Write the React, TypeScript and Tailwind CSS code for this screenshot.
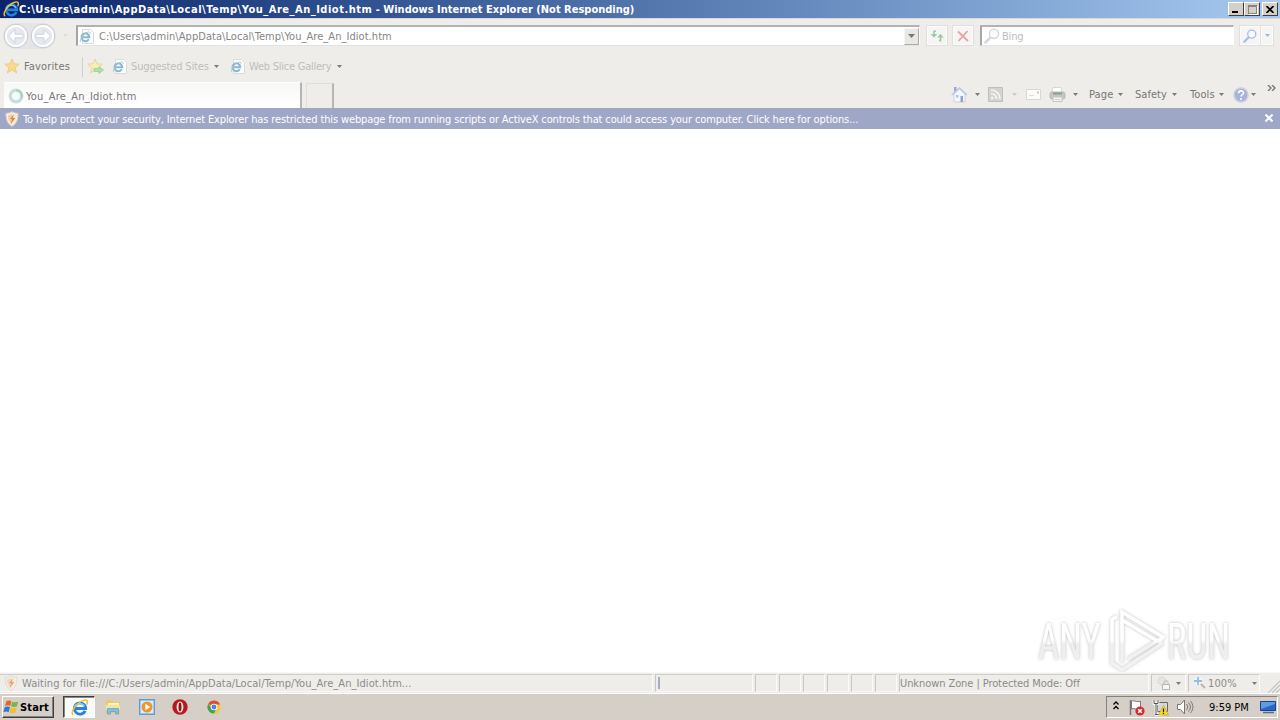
import type { ReactNode } from "react";
import clsx from "clsx";

const ADDRESS = "C:\\Users\\admin\\AppData\\Local\\Temp\\You_Are_An_Idiot.htm";

function Caret({ className }: { className?: string }) {
  return (
    <svg viewBox="0 0 5 3" className={clsx("h-[3px] w-[5px] shrink-0", className)}>
      <path d="M0 0h5L2.5 3z" fill="#7b7b79" />
    </svg>
  );
}

function IeLogo({ size }: { size: number }) {
  return (
    <svg width={size} height={size} viewBox="0 0 16 16" className="shrink-0">
      <path d="M13.3 11.2A5.300 5.300 0 1 1 13.800 8.900H4.500" fill="none" stroke="#2484dc" strokeWidth="2.700" />
      <path d="M3.300 7.500C4.300 4 10.500 2.800 12.800 6.800" fill="none" stroke="#8fd6fa" strokeWidth="1.100" />
      <path d="M2.200 15C-1.200 13.500 4 4.500 11 1.500c4-1.600 5.200.200 3.700 3.800" fill="none" stroke="#f0bf38" strokeWidth="1.400" />
    </svg>
  );
}

function PageIcon() {
  return (
    <svg width="15" height="15" viewBox="0 0 15 15" className="shrink-0">
      <path d="M3.500.5h8l3 3v11h-11z" fill="#fdfdfd" stroke="#dadad8" />
      <path d="M9.800 10.200A3.900 3.900 0 1 1 10.300 8.300H3.500" fill="none" stroke="#86b7d3" strokeWidth="2" />
      <path d="M1.500 12.800C0 11 5.500 3.500 9.500 3c2-.2 2 1 1.500 2" fill="none" stroke="#b5cfb9" />
    </svg>
  );
}

function Star({ plus }: { plus?: boolean }) {
  return (
    <svg width="17" height="17" viewBox="0 0 17 17" className="shrink-0">
      <path
        d="M8 1l2 4.800 5.200.4-4 3.400 1.300 5.200L8 12l-4.500 2.800 1.300-5.200-4-3.400L6 5.800z"
        fill={plus ? "#f8edb5" : "#f9d98c"}
        stroke={plus ? "#e8d79a" : "#efcb84"}
      />
      {plus && <path d="M7 10.500h5V8.500l4.500 3.500-4.500 3.500v-2H7z" fill="#b5dfa5" stroke="#9ccf91" strokeWidth=".8" />}
    </svg>
  );
}

function Shield({ faded }: { faded?: boolean }) {
  return (
    <svg width="14" height="16" viewBox="0 0 14 16" className="shrink-0" opacity={faded ? 0.7 : 1}>
      <path d="M7 .7c2 1.300 4 1.600 6 1.600 0 6-1 10-6 13C2 12.300 1 8.300 1 2.300c2 0 4-.3 6-1.600z" fill="#f6eee2" stroke="#ddd0c4" />
      <path d="M7 3C5.500 4 4 4.300 3 4.300c0 4 .8 6.500 4 8.700z" fill="#f0cfaa" />
      <path d="M7 3c1.500 1 3 1.300 4 1.300 0 4-.8 6.500-4 8.700z" fill="#f9e6c4" />
      <path d="M8.800 3L5 8.300h2.200L5.500 13.200 10.300 7H7.800z" fill="#d98348" />
    </svg>
  );
}

function NavCircle({ forward }: { forward?: boolean }) {
  return (
    <svg width="26" height="26" viewBox="0 0 26 26" className="shrink-0">
      <circle cx="13" cy="13" r="11.800" fill="#f5f6f8" stroke="#c7c9cd" />
      <circle cx="13" cy="13" r="10" fill="#e6eaf0" stroke="#fff" strokeWidth="1.500" />
      <path
        d="M12 6.500L5.500 13l6.500 6.500v-4.700h8v-3.600h-8z"
        fill="#fff"
        stroke="#ccd3dd"
        transform={forward ? "matrix(-1 0 0 1 26 0)" : undefined}
      />
    </svg>
  );
}

function ToolButton({ children, className }: { children: ReactNode; className?: string }) {
  return (
    <div className={clsx("flex h-[21px] items-center justify-center border border-[#dfdfdd] bg-[#f5f5f4] shadow-[inset_0_0_0_1px_#fbfbfb]", className)}>
      {children}
    </div>
  );
}

function Magnifier({ color, size }: { color: string; size: number }) {
  return (
    <svg width={size} height={size} viewBox="0 0 16 16" className="shrink-0">
      <path d="M6.500 9.500L1.500 14.500" stroke={color} strokeWidth="2.600" strokeLinecap="round" />
      <circle cx="10" cy="5.800" r="4.600" fill="#fbfcfe" stroke={color} strokeWidth="1.500" />
    </svg>
  );
}

function TitleBar() {
  const button = "flex h-[14px] border border-t-white border-l-white border-r-[#404040] border-b-[#404040] bg-[#d4d0c8]";
  return (
    <div className="flex h-[18px] items-center bg-linear-to-r from-[#0a246a] to-[#a6caf0] pl-[3px] pr-[2px]">
      <IeLogo size={16} />
      <span className="text-[11px] font-bold whitespace-pre text-white">
        <span className="tracking-[0.510px]">{ADDRESS}</span>
        <span> - Windows Internet Explorer (Not Responding)</span>
      </span>
      <div className="ml-auto flex">
        <div className={clsx(button, "w-4 items-end pb-[2px] pl-[3px]")}>
          <div className="h-[2px] w-[6px] bg-black" />
        </div>
        <div className={clsx(button, "w-4 items-center justify-center")}>
          <div className="h-[9px] w-[9px] border border-t-2 border-[#87847f] shadow-[1px_1px_0_#fff]" />
        </div>
        <div className={clsx(button, "ml-[2px] w-4 items-center justify-center")}>
          <svg width="8" height="7" viewBox="0 0 8 7">
            <path d="M.5 0l7 7M7.500 0l-7 7" stroke="#000" strokeWidth="1.700" />
          </svg>
        </div>
      </div>
    </div>
  );
}

function AddressRow() {
  return (
    <div className="flex h-[34px] items-center border-t border-[#dcd9d4] pl-[3px] text-[11px] text-[#858585]">
      <div className="flex gap-px rounded-full bg-[#e5e5e8]">
        <NavCircle />
        <NavCircle forward />
      </div>
      <svg width="5" height="3" viewBox="0 0 5 3" className="ml-[7px]">
        <path d="M0 0h5L2.500 3z" fill="#dcdcda" />
      </svg>
      <div className="ml-[8px] flex h-[21px] w-[844px] items-center border border-t-2 border-l-2 border-t-[#b0b3b3] border-l-[#a5a5a5] border-r-[#f9f9f9] border-b-[#e3e3e1] bg-white pl-px">
        <PageIcon />
        <span className="ml-[5px] tracking-[0.050px]">{ADDRESS}</span>
        <div className="ml-auto flex h-[17px] w-[15px] items-center justify-center border border-t-[#f5f5f5] border-l-[#f5f5f5] border-r-[#aaa] border-b-[#aaa] bg-[#e9e7e4]">
          <svg width="7" height="4" viewBox="0 0 7 4">
            <path d="M0 0h7L3.500 4z" fill="#777" />
          </svg>
        </div>
      </div>
      <ToolButton className="ml-[6px] w-[22px]">
        <svg width="14" height="12" viewBox="0 0 14 12">
          <path d="M6 1.200H4v4M9 10.800h1.500v-4" fill="none" stroke="#9acba0" strokeWidth="1.600" />
          <path d="M.8 4h6.400L4 7.800zM7.300 7.500h6.400l-3.200-3.800z" fill="#9acba0" />
        </svg>
      </ToolButton>
      <ToolButton className="ml-1 w-[22px]">
        <svg width="12" height="12" viewBox="0 0 12 12">
          <path d="M1 1.500L11 11M10.500 1L1.500 11" stroke="#e6a5a5" strokeWidth="1.800" />
        </svg>
      </ToolButton>
      <div className="ml-[6px] flex h-[21px] w-[254px] items-center border border-t-2 border-l-2 border-t-[#b3b3b3] border-l-[#a7a7a9] border-r-[#fff] border-b-[#e4e4e2] bg-white pl-[2px] text-[#bcbcbc]">
        <Magnifier color="#d8d7dc" size={16} />
        <span className="ml-[2px] tracking-[-0.200px]">Bing</span>
      </div>
      <ToolButton className="ml-[5px] w-[22px]">
        <Magnifier color="#a9bdeb" size={14} />
      </ToolButton>
      <ToolButton className="w-[13px] border-l-0">
        <svg width="5" height="3" viewBox="0 0 5 3">
          <path d="M0 0h5L2.500 3z" fill="#9fb3dc" />
        </svg>
      </ToolButton>
    </div>
  );
}

function FavoritesRow() {
  return (
    <div className="flex h-[29px] items-center pl-1 text-[11px] text-[#bebdbb]">
      <Star />
      <span className="ml-[3px] w-[58px] tracking-[0.150px] text-[#777775]">Favorites</span>
      <div className="h-5 w-px bg-[#cfcfcd]" />
      <div className="ml-1 flex w-[25px]">
        <Star plus />
      </div>
      <PageIcon />
      <span className="ml-[4px] w-[83px] tracking-[-0.150px]">Suggested Sites</span>
      <Caret />
      <div className="ml-[11px] flex">
        <PageIcon />
      </div>
      <span className="ml-[4px] w-[88px] tracking-[-0.240px]">Web Slice Gallery</span>
      <Caret />
    </div>
  );
}

function HomeIcon() {
  return (
    <svg width="17" height="17" viewBox="0 0 17 17" className="shrink-0">
      <path d="M3 8v8h11V8L8.500 3z" fill="#f3f6fd" stroke="#cdd2e0" />
      <path d="M.8 8.800L8.500 2l7.200 6.800" fill="none" stroke="#bfc7e4" strokeWidth="1.600" />
      <path d="M3 1h2.500v3L3 6z" fill="#aaa2ce" />
      <path d="M9.500 10H12v6H9.500z" fill="#8da4c8" />
      <path d="M5 9h2.500v2.500H5z" fill="#b4c4e2" />
    </svg>
  );
}

function PrinterIcon() {
  return (
    <svg width="17" height="17" viewBox="0 0 17 17" className="shrink-0">
      <path d="M4 1.500h8l1 5H3z" fill="#fff" stroke="#d8d8d6" />
      <rect x="1" y="6" width="15" height="7" rx="2" fill="#c4c4c2" stroke="#bababa" />
      <path d="M4 7.500h9" stroke="#8c9c8f" strokeWidth="2" />
      <path d="M4 11h9v4.500H4z" fill="#f7f7f7" stroke="#c2c2c0" />
      <path d="M5.500 13.500h6" stroke="#c9d2c5" />
    </svg>
  );
}

const menus = [
  { label: "Page", className: "ml-[11px] w-[29px] tracking-[0.150px]" },
  { label: "Safety", className: "ml-[12px] w-[37px] tracking-[0.050px]" },
  { label: "Tools", className: "ml-[13px] w-[29px] tracking-[0.100px]" },
];

function TabRow() {
  return (
    <div className="flex h-[27px] items-end text-[11px]">
      <div className="ml-1 flex h-[26px] w-[298px] items-center border-t border-r-2 border-t-[#fff] border-r-[#b5b5b3] bg-linear-to-b from-[#f8f8f7] to-white pt-px pl-1">
        <svg width="16" height="16" viewBox="0 0 16 16">
          <circle cx="8" cy="8" r="5.800" fill="#f6fbf9" stroke="#c6ddd8" strokeWidth="3.200" />
          <path d="M8 2.200A5.800 5.800 0 0 1 13.500 10" fill="none" stroke="#a9d0c6" strokeWidth="2" />
        </svg>
        <span className="mt-px ml-[2px] tracking-[0.220px] text-[#777]">You_Are_An_Idiot.htm</span>
      </div>
      <div className="ml-1 h-[25px] w-[28px] border border-r-2 border-b-0 border-t-[#deddd9] border-l-[#e1dfdb] border-r-[#b6b6b4]" />
      <div className="ml-auto flex h-full items-center text-[#767674]">
        <HomeIcon />
        <Caret className="ml-[7px]" />
        <svg width="15" height="15" viewBox="0 0 15 15" className="ml-[8px]">
          <path d="M.5.5h14v14H.5z" fill="#d3d3d1" stroke="#bfbfbd" />
          <path d="M3 6.500A5.500 5.500 0 0 1 8.500 12M3 3a9 9 0 0 1 9 9" fill="none" stroke="#f5f5f5" strokeWidth="1.600" />
          <circle cx="4.200" cy="11" r="1.300" fill="#f5f5f5" />
        </svg>
        <Caret className="ml-[9px] opacity-30" />
        <svg width="15" height="11" viewBox="0 0 15 11" className="ml-[9px]">
          <path d="M.5.5h14v10H.5z" fill="#fbfbfa" stroke="#dad8d5" />
          <path d="M11 2.500h2v2h-2z" fill="#e0bdb6" />
          <path d="M3 6.500h5" stroke="#dedede" />
        </svg>
        <div className="ml-[8px] flex">
          <PrinterIcon />
        </div>
        <Caret className="ml-[7px]" />
        {menus.map((menu) => (
          <div key={menu.label} className="flex items-center">
            <span className={menu.className}>{menu.label}</span>
            <Caret />
          </div>
        ))}
        <svg width="16" height="16" viewBox="0 0 16 16" className="ml-[9px]">
          <circle cx="8" cy="8" r="7" fill="#a7b3da" stroke="#cdd0da" strokeWidth="1.500" />
          <path d="M5.500 6.200c.2-3.200 5.200-3 5 0C10.400 7.800 8 7.600 8 9.500M8 11v2" fill="none" stroke="#fff" strokeWidth="1.600" />
        </svg>
        <Caret className="ml-[2px]" />
        <svg width="9" height="6" viewBox="0 0 9 6" className="mr-1 ml-[11px] mb-[13px]" fill="none" stroke="#6f6f6d" strokeWidth="1.300">
          <path d="M1 0l3 3-3 3M5 0l3 3-3 3" />
        </svg>
      </div>
    </div>
  );
}

function InfoBar() {
  return (
    <div className="flex h-[21px] items-center bg-[#9fa7c6] pr-[7px] pl-[5px] text-[11px] text-white">
      <Shield />
      <span className="mt-px ml-1 tracking-[-0.128px]">
        To help protect your security, Internet Explorer has restricted this webpage from running scripts or ActiveX controls that could access your computer. Click here for options...
      </span>
      <svg width="8" height="8" viewBox="0 0 8 8" className="ml-auto mb-[2px]">
        <path d="M.5.5l7 7M7.500.5l-7 7" stroke="#fff" strokeWidth="2" />
      </svg>
    </div>
  );
}

function Watermark() {
  return (
    <svg width="204" height="72" viewBox="0 0 204 72" className="absolute right-[40px] bottom-[-4px]">
      <defs>
        <linearGradient id="mark" gradientUnits="userSpaceOnUse" x1="0" y1="0" x2="0" y2="72">
          <stop offset=".5" stopColor="#fff" />
          <stop offset=".56" stopColor="#f0f0f0" />
          <stop offset="1" stopColor="#f3f3f3" />
        </linearGradient>
        {/* the text is drawn from its own origin, so its shading is too */}
        <linearGradient id="letters" gradientUnits="userSpaceOnUse" x1="0" y1="-55" x2="0" y2="17">
          <stop offset=".5" stopColor="#fff" />
          <stop offset=".56" stopColor="#ededed" />
          <stop offset="1" stopColor="#f3f3f3" />
        </linearGradient>
        <filter id="glow" x="-10%" y="-10%" width="120%" height="120%">
          <feDropShadow dx="0" dy="0" stdDeviation="1.600" floodColor="#888" floodOpacity=".6" />
        </filter>
      </defs>
      <g fill="url(#letters)" fontFamily="Roboto, sans-serif" fontSize="49" filter="url(#glow)">
        <text transform="translate(2 55) scale(.75 1)">ANY</text>
        <text transform="translate(131 55) scale(.75 1)">RUN</text>
      </g>
      <g fill="none" stroke="url(#mark)" strokeWidth="3.500" filter="url(#glow)">
        <path d="M81 12.500l-5 3V59l10 7 41-27" />
        <path d="M92 55l34-21" />
        <path d="M86 58V8l41 25-4 5-37-22" />
      </g>
    </svg>
  );
}

function StatusPane({ className, children }: { className?: string; children?: ReactNode }) {
  return (
    <div className={clsx("flex h-[18px] items-center border border-t-[#cfcecb] border-l-[#c9c8c6] border-r-[#fbfbfb] border-b-[#f8f8f8]", className)}>
      {children}
    </div>
  );
}

function StatusBar() {
  return (
    <div className="relative flex h-[21px] items-center gap-[2px] border-t border-[#f8f8f8] bg-[#efedea] text-[11px] text-[#8b8b89]">
      <StatusPane className="w-[653px] border-l-0 pl-1">
        <Shield faded />
        <span className="ml-1 tracking-[0.060px]">Waiting for file:///C:/Users/admin/AppData/Local/Temp/You_Are_An_Idiot.htm...</span>
      </StatusPane>
      <StatusPane className="w-[98px] pl-[2px]">
        <div className="h-3 w-[2px] bg-[#a5acc4]" />
      </StatusPane>
      {Array.from({ length: 6 }, (_, i) => (
        <StatusPane key={i} className="w-[22px]" />
      ))}
      <StatusPane className="w-[250px]">
        <span className="tracking-[-0.080px]">Unknown Zone | Protected Mode: Off</span>
      </StatusPane>
      <StatusPane className="w-[35px] pl-1">
        <svg width="15" height="15" viewBox="0 0 15 15">
          <circle cx="6" cy="5" r="4" fill="#e5e5e4" stroke="#d2d2d0" strokeDasharray="2 1" />
          <path d="M6.500 8.500h7v5h-7z" fill="#f8f8f8" stroke="#b4b4b2" />
          <path d="M8 8V6.500c0-2.500 4-2.500 4 0V8" fill="none" stroke="#b4b4b2" />
        </svg>
        <Caret className="ml-[5px]" />
      </StatusPane>
      <StatusPane className="w-[72px] pl-1">
        <svg width="14" height="14" viewBox="0 0 14 14">
          <path d="M7 7l5 5" stroke="#bdb6a8" strokeWidth="2" />
          <circle cx="5" cy="5" r="4" fill="#eef6fb" />
          <path d="M5 1v8M1 5h8" stroke="#8fbfe3" strokeWidth="1.800" />
        </svg>
        <span className="ml-px w-[44px] tracking-[0.100px]">100%</span>
        <Caret />
      </StatusPane>
      <svg width="12" height="12" viewBox="0 0 12 12" className="ml-auto self-end" stroke="#c2c1be" strokeWidth="1.200">
        <path d="M0 12L12 0M4 12l8-8M8 12l4-4" />
      </svg>
    </div>
  );
}

function StartFlag() {
  return (
    <svg width="17" height="16" viewBox="0 0 17 16" className="shrink-0">
      <path d="M3.500 2c2-1 3.500-.6 5 .2L7.200 7c-1.700-.8-3-.9-5.200-.1z" fill="#e8622c" />
      <path d="M9.300 2.700c2 .9 3.800.8 6-.2L14 7.200c-2 1-4 1-6 .1z" fill="#75b843" />
      <path d="M1.800 8c2-.9 3.500-.7 5.200.1l-1.300 5c-2-.9-3.500-.8-5.300 0z" fill="#2f78cf" />
      <path d="M7.800 8.500c2 .9 4 .8 6-.1l-1.400 5c-2 .9-4 .9-6 0z" fill="#f3bd2d" />
    </svg>
  );
}

function Taskbar() {
  return (
    <div className="flex h-[27px] items-center border-t border-white bg-[#d5cfc7] pr-[2px] pl-[2px]">
      <div className="flex h-[22px] w-[52px] items-center border border-t-white border-l-white border-r-[#404040] border-b-[#404040] shadow-[inset_-1px_-1px_0_#85817b]">
        <StartFlag />
        <span className="text-[11px] font-bold tracking-[0.150px] text-black">Start</span>
      </div>
      <div className="ml-[9px] flex h-[22px] w-[32px] items-center justify-center border border-t-[#404040] border-l-[#404040] border-r-white border-b-white bg-[#fafaf9] pl-px shadow-[inset_1px_1px_0_#888]">
        <IeLogo size={17} />
      </div>
      <svg width="16" height="16" viewBox="0 0 16 16" className="ml-[10px]">
        <path d="M1 3V1h6l1 2h7v11H1z" fill="#e8cb6f" />
        <path d="M3 4h11v4H3z" fill="#fbf4cf" />
        <path d="M1 6h14v5H1z" fill="#f7e39a" />
        <path d="M2.500 15V9.500h11V15h-3v-2.500h-5V15z" fill="#83bfe1" stroke="#589dc8" strokeWidth=".7" />
      </svg>
      <svg width="16" height="16" viewBox="0 0 16 16" className="ml-[18px]">
        <path d="M.7.700h14.600v14.600H.7z" fill="#d9ecfa" stroke="#5b9ed4" strokeWidth="1.400" />
        <circle cx="8" cy="8" r="5.500" fill="#f3942a" />
        <path d="M6.300 4.800v6.400L11.300 8z" fill="#fff" />
      </svg>
      <svg width="16" height="16" viewBox="0 0 16 16" className="ml-[17px]">
        <circle cx="8" cy="8" r="7.700" fill="#b71920" />
        <ellipse cx="8" cy="8" rx="3.400" ry="5.500" fill="#f4e7e5" />
        <ellipse cx="8" cy="8" rx="1.500" ry="4.400" fill="#8d1218" />
      </svg>
      <svg width="14" height="14" viewBox="0 0 16 16" className="ml-[19px]">
        <circle cx="8" cy="8" r="7.500" fill="#f4c83c" />
        <path d="M8 8L1.500 4.250A7.500 7.500 0 0 1 14.500 4.250L15 5H8z" fill="#df4b3d" />
        <path d="M1.500 4.250A7.500 7.500 0 0 0 8 15.500L10.500 10 5 9z" fill="#3ba659" />
        <circle cx="8" cy="8" r="3.700" fill="#fff" />
        <circle cx="8" cy="8" r="2.800" fill="#4685e4" />
      </svg>
      <div className="ml-auto flex h-[22px] w-[172px] items-center border border-t-[#85817b] border-l-[#85817b] border-r-white border-b-white pl-[6px]">
        <svg width="6" height="9" viewBox="0 0 6 9" className="mb-1" fill="none" stroke="#000" strokeWidth="1.300">
          <path d="M.5 3.500L3 1l2.500 2.500M.5 8L3 5.500 5.500 8" />
        </svg>
        <svg width="17" height="17" viewBox="0 0 17 17" className="ml-[10px]">
          <path d="M1.500 16V1" stroke="#777" strokeWidth="1.500" />
          <path d="M2.500 2c3-1 4 1.500 9 .3V10c-4 1.200-6-1.200-9-.2z" fill="#fff" stroke="#777" />
          <circle cx="11" cy="12" r="4.600" fill="#d62c30" />
          <path d="M9.200 10.200l3.600 3.600M12.800 10.200l-3.600 3.600" stroke="#fff" strokeWidth="1.500" />
        </svg>
        <svg width="17" height="17" viewBox="0 0 17 17" className="ml-[6px]">
          <path d="M5.500 3.500h10v9h-10z" fill="#d6d6d4" stroke="#666" />
          <path d="M2 1v3.500h4V1M4 4.500v11M3 15.500h7" fill="none" stroke="#fff" strokeWidth="2.600" />
          <path d="M2 1v3.500h4V1M4 4.500v11M3 15.500h7" fill="none" stroke="#555" />
          <path d="M11.500 6.500l5 9.500h-10z" fill="#fbdc26" stroke="#c9a41a" strokeWidth=".7" />
          <path d="M11.500 9.500v3.500M11.500 13.800v1.200" stroke="#222" strokeWidth="1.300" />
        </svg>
        <svg width="17" height="16" viewBox="0 0 17 16" className="ml-[8px]" fill="none" stroke="#777">
          <path d="M.5 5.500h3L7.500 1v14L3.500 10.500h-3z" fill="#fff" />
          <path d="M9.500 5c1.500 2 1.500 4 0 6M11.500 3.500c2.500 3 2.500 6 0 9M13.500 2c3.200 4 3.200 8 0 12" />
        </svg>
        <span className="ml-[15px] w-[51px] text-[11px] text-black">9:59 PM</span>
        <svg width="16" height="14" viewBox="0 0 16 14">
          <path d="M.5 1.500h15v9H.5z" fill="#2869c4" stroke="#17448d" />
          <path d="M1 2h14v2L1 9z" fill="#5e9ce3" />
          <path d="M3 12.500h11" stroke="#556b92" strokeWidth="1.500" />
        </svg>
      </div>
    </div>
  );
}

export default function App() {
  return (
    <div className="flex h-[720px] w-[1280px] flex-col overflow-hidden bg-[#efedea] font-['DejaVu_Sans_Condensed','DejaVu_Sans',sans-serif] leading-none whitespace-nowrap [font-stretch:condensed]">
      <TitleBar />
      <AddressRow />
      <FavoritesRow />
      <TabRow />
      <InfoBar />
      <main className="relative flex-1 bg-white">
        <Watermark />
      </main>
      <StatusBar />
      <Taskbar />
    </div>
  );
}
